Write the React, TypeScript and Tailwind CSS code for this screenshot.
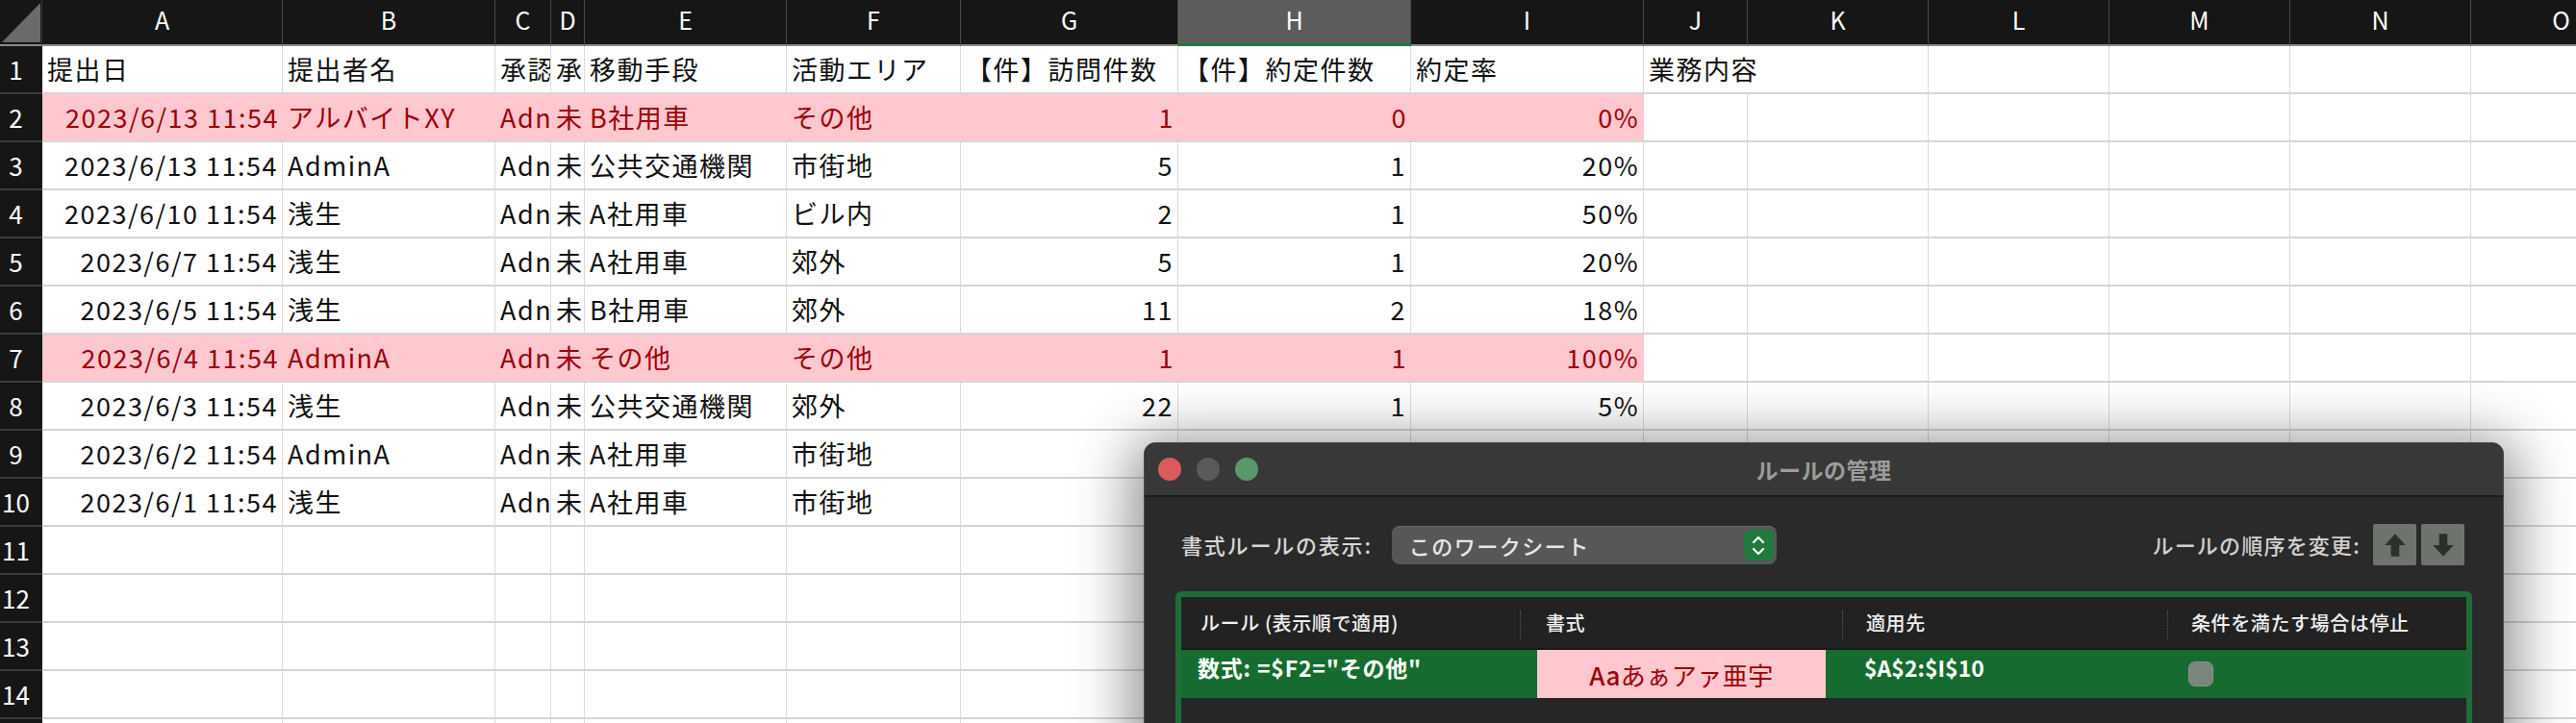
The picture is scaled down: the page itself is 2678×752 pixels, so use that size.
import React from 'react';

const GRID =
  "grid grid-cols-[44px_250px_221px_58px_35px_210px_181px_226px_242px_242px_108px_188px_188px_188px_188px_188px] grid-rows-[48px_repeat(15,50px)]";

const LETTERS = ['A','B','C','D','E','F','G','H','I','J','K','L','M','N','O'];

type Row = { cells: (string | number)[]; pink?: boolean };

const ROWS: Row[] = [
  { cells: ['提出日','提出者名','承認','承','移動手段','活動エリア','【件】訪問件数','【件】約定件数','約定率','業務内容'] },
  { cells: ['2023/6/13 11:54','アルバイトXY','Adn','未','B社用車','その他',1,0,'0%'], pink: true },
  { cells: ['2023/6/13 11:54','AdminA','Adn','未','公共交通機関','市街地',5,1,'20%'] },
  { cells: ['2023/6/10 11:54','浅生','Adn','未','A社用車','ビル内',2,1,'50%'] },
  { cells: ['2023/6/7 11:54','浅生','Adn','未','A社用車','郊外',5,1,'20%'] },
  { cells: ['2023/6/5 11:54','浅生','Adn','未','B社用車','郊外',11,2,'18%'] },
  { cells: ['2023/6/4 11:54','AdminA','Adn','未','その他','その他',1,1,'100%'], pink: true },
  { cells: ['2023/6/3 11:54','浅生','Adn','未','公共交通機関','郊外',22,1,'5%'] },
  { cells: ['2023/6/2 11:54','AdminA','Adn','未','A社用車','市街地'] },
  { cells: ['2023/6/1 11:54','浅生','Adn','未','A社用車','市街地'] },
];

const FONT = "font-['Noto_Sans_CJK_JP','Noto_Sans',sans-serif]";

function Corner() {
  return (
    <div className="bg-[#161616] border-b-2 border-[#8c8c8c] border-r border-r-[#3a3a3a] relative">
      <svg className="absolute left-[2px] top-[3px]" width="40" height="41" viewBox="0 0 40 41">
        <polygon points="0,41 40,0 40,41" fill="#6a6a6a" />
      </svg>
    </div>
  );
}

function ColHeader({ letter }: { letter: string }) {
  const sel = letter === 'H';
  return (
    <div
      className={
        'flex items-center justify-center pb-[4px] text-[25px] text-white border-r border-r-[#4a4a4a] ' +
        (sel ? 'bg-[#5c5c5c] border-b-[3px] border-b-[#1f7a3c]' : 'bg-[#161616] border-b-2 border-b-[#8c8c8c]')
      }
    >
      {letter}
    </div>
  );
}

function RowHeader({ n }: { n: number }) {
  return (
    <div className="bg-[#161616] border-b-2 border-[#3c3c3c] flex items-center">
      <span className="w-[33px] text-center text-[26px] leading-none text-white">{n}</span>
    </div>
  );
}

function Cell({ value, col, row, pink }: { value?: string | number; col: number; row: number; pink?: boolean }) {
  const isNum = typeof value === 'number' || (typeof value === 'string' && /%$/.test(value));
  const isDate = row > 0 && col === 0;
  const right = isNum || isDate;
  const inPink = pink && col <= 8;
  const overflow = row === 0 && col === 9;
  let cls = 'flex items-center whitespace-nowrap text-[27px] tracking-[1.5px] border-b-2 border-b-[#d5d5d5] ';
  cls += right ? 'justify-end pr-[4px] ' : 'pl-[5px] ';
  cls += overflow ? 'overflow-visible relative z-10 ' : 'overflow-hidden ';
  if (inPink) {
    cls += 'bg-[#ffc7ce] text-[#9c0006] ' + (col === 8 ? 'border-r border-r-[#ffc7ce] ' : '');
  } else {
    cls += 'text-[#111111] ' + (overflow ? '' : 'border-r border-r-[#dadada] ');
  }
  return <div className={cls}>{value === undefined ? '' : String(value)}</div>;
}

function Sheet() {
  const rows = [];
  for (let r = 0; r < 15; r++) {
    const data = ROWS[r];
    rows.push(<RowHeader key={'rh' + r} n={r + 1} />);
    for (let c = 0; c < 15; c++) {
      rows.push(
        <Cell key={r + '-' + c} row={r} col={c} value={data ? data.cells[c] : undefined} pink={data?.pink} />
      );
    }
  }
  return (
    <div className={GRID + ' bg-white'}>
      <Corner />
      {LETTERS.map((l) => (
        <ColHeader key={l} letter={l} />
      ))}
      {rows}
    </div>
  );
}

function ArrowBtn({ down }: { down?: boolean }) {
  return (
    <div className="w-[45px] h-[43px] bg-[#6e736e] rounded-[2px] flex items-center justify-center">
      <svg width="26" height="28" viewBox="0 0 24 26" className={down ? 'rotate-180' : ''}>
        <path d="M12 2 L22 13 H16 V24 H8 V13 H2 Z" fill="#2e2e2e" />
      </svg>
    </div>
  );
}

function Dialog() {
  return (
    <div className="absolute left-[1189px] top-[460px] w-[1414px] h-[340px] rounded-t-[12px] overflow-hidden bg-[#2a2a2a] border border-[#4a4a4a] shadow-[0_10px_60px_12px_rgba(0,0,0,0.45)]">
      {/* title bar */}
      <div className="h-[56px] bg-[#383838] border-b-2 border-[#1b1b1b] relative flex items-center pl-[14px] gap-[16px]">
        <span className="w-[24px] h-[24px] rounded-full bg-[#dc5a5c]" />
        <span className="w-[24px] h-[24px] rounded-full bg-[#5a5a5a]" />
        <span className="w-[24px] h-[24px] rounded-full bg-[#5c9669]" />
        <div className="absolute inset-0 flex items-center justify-center pointer-events-none">
          <span className="text-[23px] font-bold text-[#9c9c9c] tracking-[0.5px]">ルールの管理</span>
        </div>
      </div>
      {/* controls row */}
      <div className="flex items-center pl-[38px] pr-[40px] pt-[28px]">
        <span className="text-[22px] font-medium text-[#d6d6d6] tracking-[1.8px]">書式ルールの表示:</span>
        <div className="ml-[20px] w-[400px] h-[40px] rounded-[8px] bg-[#575757] border-t border-[#6a6a6a] flex items-center justify-between pl-[18px] pr-[3px]">
          <span className="text-[22px] font-medium text-[#e6e6e6] tracking-[1.5px]">このワークシート</span>
          <div className="w-[31px] h-[32px] rounded-[6px] bg-[#1f7a3d] flex flex-col items-center justify-center gap-[3px]">
            <svg width="14" height="9" viewBox="0 0 14 9">
              <path d="M2 7 L7 2 L12 7" stroke="#ffffff" strokeWidth="2.2" fill="none" strokeLinecap="round" strokeLinejoin="round" />
            </svg>
            <svg width="14" height="9" viewBox="0 0 14 9">
              <path d="M2 2 L7 7 L12 2" stroke="#ffffff" strokeWidth="2.2" fill="none" strokeLinecap="round" strokeLinejoin="round" />
            </svg>
          </div>
        </div>
        <div className="flex-1" />
        <span className="text-[22px] font-medium text-[#d0d0d0] tracking-[1.2px] mr-[13px]">ルールの順序を変更:</span>
        <div className="flex gap-[5px]">
          <ArrowBtn />
          <ArrowBtn down />
        </div>
      </div>
      {/* rules table */}
      <div className="mx-[32px] mt-[27px] border-[6px] border-[#1e6d38] rounded-[6px] bg-[#262626] h-[200px]">
        <div className="h-[55px] bg-[#222222] border-b-2 border-[#1a1a1a] flex items-center text-[20px] font-medium text-[#f0f0f0] tracking-[0.6px]">
          <div className="w-[352px] pl-[20px] flex items-center">ルール (表示順で適用)</div>
          <div className="w-[335px] h-full flex items-center relative pl-[27px]">
            <span className="absolute left-0 top-[14px] h-[30px] border-l border-dotted border-[#5a5a5a]" />
            書式
          </div>
          <div className="w-[338px] h-full flex items-center relative pl-[25px]">
            <span className="absolute left-0 top-[14px] h-[30px] border-l border-dotted border-[#5a5a5a]" />
            適用先
          </div>
          <div className="flex-1 h-full flex items-center relative pl-[25px]">
            <span className="absolute left-0 top-[14px] h-[30px] border-l border-dotted border-[#5a5a5a]" />
            条件を満たす場合は停止
          </div>
        </div>
        <div className="h-[50px] bg-[#166c30] flex text-white">
          <div className="w-[352px] pl-[17px] pt-[1px] text-[23px] font-semibold tracking-[0.8px]">数式: =$F2="その他"</div>
          <div className="w-[335px] pl-[18px]">
            <div className="w-[300px] h-full bg-[#ffc7ce] flex items-center justify-center text-[26px] text-[#9c0006] tracking-[0.5px]">
              <span className="font-medium">Aa</span>あぁアァ亜宇
            </div>
          </div>
          <div className="w-[338px] pl-[23px] pt-[1px] text-[23px] font-semibold">$A$2:$I$10</div>
          <div className="flex-1 pl-[22px] pt-[12px]">
            <div className="w-[26px] h-[26px] rounded-[7px] bg-[#7b857d] border border-[#8a948b]" />
          </div>
        </div>
      </div>
    </div>
  );
}

export default function App() {
  return (
    <div className={'relative w-[2678px] h-[752px] overflow-hidden bg-white ' + FONT}>
      <Sheet />
      <Dialog />
    </div>
  );
}
